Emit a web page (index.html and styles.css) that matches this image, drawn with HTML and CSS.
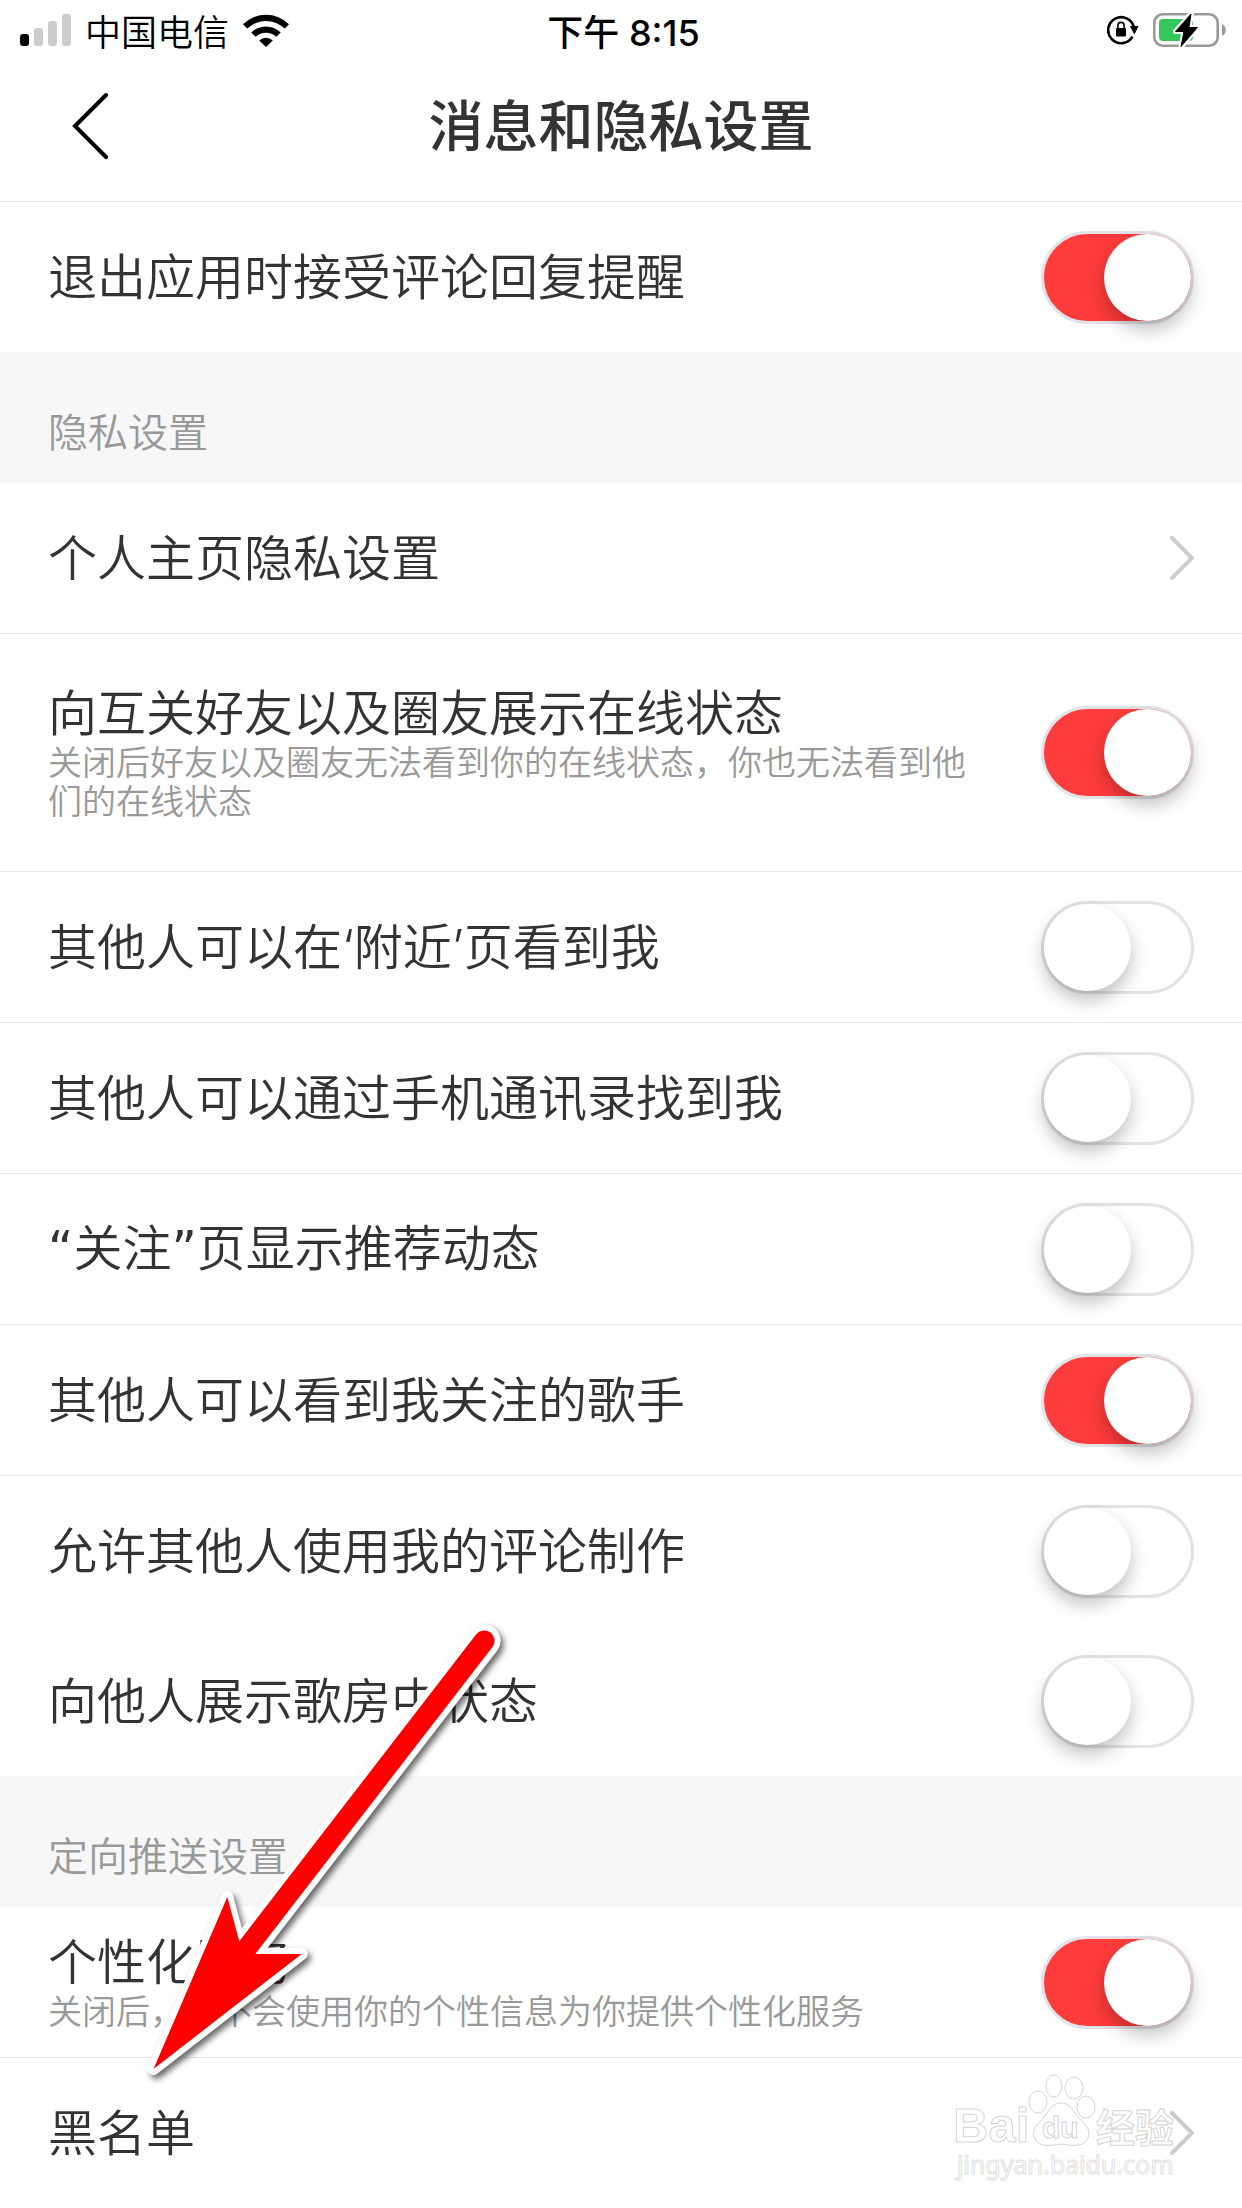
FILE: index.html
```html
<!DOCTYPE html>
<html lang="zh-CN">
<head>
  <meta charset="UTF-8">
  <meta name="viewport" content="width=device-width, initial-scale=1.0">
  <title>消息和隐私设置</title>
  <link rel="stylesheet" href="styles.css">
</head>
<body>

  <div class="status-bar">
    <div class="status-left">
      <svg class="signal" width="51" height="32" viewBox="0 0 51 32">
        <rect x="0" y="20" width="9" height="12" rx="3" fill="#000"/>
        <rect x="14" y="14" width="9" height="18" rx="3" fill="#ccc"/>
        <rect x="28" y="7" width="9" height="25" rx="3" fill="#ccc"/>
        <rect x="42" y="0" width="9" height="32" rx="3" fill="#ccc"/>
      </svg>
      <span>中国电信</span>
      <svg class="wifi" width="46" height="33" viewBox="0 0 46 33">
        <path d="M0 10.300a32.500 32.500 0 0 1 46 0l-4.300 4.300a26.500 26.500 0 0 0-37.400 0z"/>
        <path d="M8.300 18.400a21 21 0 0 1 29.400 0l-4.400 4.400a14.800 14.800 0 0 0-20.600 0z"/>
        <path d="M16.200 26.400a9.800 9.800 0 0 1 13.600 0L23 33z"/>
      </svg>
    </div>
    <div class="status-time">下午 8:15</div>
    <div class="status-right">
      <svg width="32" height="30" viewBox="0 0 32 30">
        <path d="M25.500 21.600A13 13 0 1 1 27 13" fill="none" stroke="#000" stroke-width="2.600"/>
        <path d="M23.500 11.500h7.500l-3.700 7z" stroke="#000" stroke-linejoin="round"/>
        <rect x="9" y="13" width="10" height="8.500" rx="1"/>
        <path d="M10.900 13v-2.500a3.100 3.100 0 0 1 6.200 0V13" fill="none" stroke="#000" stroke-width="1.600"/>
      </svg>
      <svg width="74" height="36" viewBox="0 0 74 36">
        <rect x="1.300" y="2.300" width="63.400" height="31.400" rx="8.500" fill="none" stroke="#999" stroke-width="2.600"/>
        <rect x="6" y="7" width="34" height="22" rx="4" fill="#34c759"/>
        <path d="M69 12c5 2 5 10 0 12z" fill="#999"/>
        <path d="M38.500 1 22.500 19.500H31L28 35 44.500 15.500H36z" fill="#000" stroke="#fff" stroke-width="5" stroke-linejoin="round"/>
        <path d="M38 2 22.500 19.500H31L28 34.500 44.500 15.500H36z" fill="#000" stroke="#000" stroke-linejoin="round"/>
      </svg>
    </div>
  </div>

  <header class="navbar">
    <button class="back" aria-label="返回">
      <svg width="36" height="68" viewBox="0 0 36 68"><path d="M34 3 3 34l31 31"/></svg>
    </button>
    <h1>消息和隐私设置</h1>
  </header>

  <main>
    <div class="row last">
      <label class="name" for="reply">退出应用时接受评论回复提醒</label>
      <input class="switch" type="checkbox" id="reply" checked>
    </div>

    <h2>隐私设置</h2>

    <a class="row" href="#privacy">
      <span class="name">个人主页隐私设置</span>
      <svg class="chevron" width="26" height="44" viewBox="0 0 26 44"><path d="M4 2l20 20L4 42"/></svg>
    </a>
    <div class="row tall">
      <label class="text" for="online">
        <span class="name">向互关好友以及圈友展示在线状态</span>
        <span class="desc">关闭后好友以及圈友无法看到你的在线状态，你也无法看到他们的在线状态</span>
      </label>
      <input class="switch" type="checkbox" id="online" checked>
    </div>
    <div class="row">
      <label class="name" for="nearby">其他人可以在‘附近’页看到我</label>
      <input class="switch" type="checkbox" id="nearby">
    </div>
    <div class="row">
      <label class="name" for="contacts">其他人可以通过手机通讯录找到我</label>
      <input class="switch" type="checkbox" id="contacts">
    </div>
    <div class="row">
      <label class="name" for="feed"><span class="quote">“</span>关注<span class="quote">”</span>页显示推荐动态</label>
      <input class="switch" type="checkbox" id="feed">
    </div>
    <div class="row">
      <label class="name" for="singers">其他人可以看到我关注的歌手</label>
      <input class="switch" type="checkbox" id="singers" checked>
    </div>
    <div class="row last">
      <label class="name" for="comments">允许其他人使用我的评论制作</label>
      <input class="switch" type="checkbox" id="comments">
    </div>
    <div class="row last">
      <label class="name" for="room">向他人展示歌房中状态</label>
      <input class="switch" type="checkbox" id="room">
    </div>

    <h2>定向推送设置</h2>

    <div class="row">
      <label class="text" for="personal">
        <span class="name">个性化服务</span>
        <span class="desc">关闭后，将不会使用你的个性信息为你提供个性化服务</span>
      </label>
      <input class="switch" type="checkbox" id="personal" checked>
    </div>
    <a class="row last" href="#blacklist">
      <span class="name">黑名单</span>
      <svg class="chevron" width="26" height="44" viewBox="0 0 26 44"><path d="M4 2l20 20L4 42"/></svg>
    </a>
  </main>

  <!-- arrow pointing at the blacklist row -->
  <svg class="arrow" width="380" height="460" viewBox="0 0 380 460">
    <g transform="translate(-140 -1620)">
      <path class="arrow-edge" d="M153.500 2069 227.300 1897l12 44.300L476 1634.500a10 10 0 0 1 16.500 12.500L255.300 1954h46.400z"/>
      <path class="arrow-fill" d="M153.500 2069 227.300 1897l12 44.300L476 1634.500a10 10 0 0 1 16.500 12.500L255.300 1954h46.400z"/>
    </g>
  </svg>

  <!-- watermark -->
  <svg class="watermark" width="240" height="120" viewBox="0 0 240 120">
    <text class="brand" x="9" y="62" font-size="49">Bai</text>
    <ellipse cx="94" cy="22" rx="9" ry="11"/>
    <ellipse cx="110" cy="6" rx="8" ry="11"/>
    <ellipse cx="130" cy="8" rx="9" ry="11"/>
    <ellipse cx="142" cy="27" rx="9" ry="11"/>
    <path d="M117 23c10 0 12 9 18 15 8 8 12 13 9 20-4 9-14 8-27 6-12 2-22 3-26-5-4-8 1-13 7-20 7-7 9-16 19-16z"/>
    <text class="brand" x="98" y="58" font-size="30">du</text>
    <text class="brand" x="152" y="62" font-size="39">经验</text>
    <text class="site" x="13" y="94" font-size="25">jingyan.baidu.com</text>
  </svg>

</body>
</html>
```
FILE: styles.css
```css
* {
  box-sizing: border-box;
}
body {
  position: relative;
  margin: 0;
  background-color: #fff;
  color: #333;
  font-family: Inter, 'Noto Sans CJK SC', sans-serif;
}
.status-bar {
  display: grid;
  grid-template-columns: 1fr auto 1fr;
  align-items: center;
  height: 60px;
  padding: 0 15px 0 20px;
  color: #000;
  font-size: 36px;
  font-weight: 350;
}
.status-left, .status-right {
  display: flex;
  align-items: center;
  gap: 14px;
}
.status-right {
  justify-content: flex-end;
}
.status-time {
  font-weight: 500;
}
.navbar {
  display: grid;
  grid-template-columns: 120px 1fr 120px;
  align-items: center;
  height: 142px;
  padding-bottom: 10px;
  border-bottom: 1px solid #e5e5e5;
}
.back {
  display: flex;
  width: 120px;
  padding: 0 0 0 72px;
  border: none;
  background: none;
  cursor: pointer;
}
.back path {
  fill: none;
  stroke: #000;
  stroke-width: 4;
  stroke-linecap: round;
}
h1 {
  margin: 0;
  font-size: 55px;
  font-weight: 500;
  line-height: 80px;
  text-align: center;
}
h2 {
  margin: 0;
  padding: 51px 48px 20px;
  background-color: #f7f7f7;
  color: #999;
  font-size: 40px;
  font-weight: 350;
  line-height: 60px;
}
.row {
  display: flex;
  align-items: center;
  justify-content: space-between;
  min-height: 151px;
  padding: 0 48px;
  border-bottom: 1px solid #e5e5e5;
  color: #333;
  font-weight: 350;
  text-decoration: none;
}
.row.last {
  min-height: 150px;
  border-bottom: none;
}
.row.tall {
  padding-top: 50px;
  padding-bottom: 50px;
}
.text {
  max-width: 920px;
}
.name {
  display: block;
  font-size: 49px;
  line-height: 59px;
}
.quote {
  font-family: 'DejaVu Sans', sans-serif;
  font-weight: 400;
}
.desc {
  display: block;
  color: #999;
  font-size: 34px;
  line-height: 39px;
}
.chevron path {
  fill: none;
  stroke: #ccc;
  stroke-width: 4;
  stroke-linecap: round;
}
.switch {
  appearance: none;
  flex-shrink: 0;
  width: 153px;
  height: 93px;
  margin: 0;
  border: 3px solid #e3e2e7;
  border-radius: 47px;
  background-color: #fff;
  cursor: pointer;
}
.switch::before {
  content: "";
  display: block;
  width: 87px;
  height: 87px;
  border-radius: 50%;
  background-color: #fff;
  box-shadow: 0 9px 18px rgba(0, 0, 0, 0.25);
}
.switch:checked {
  background-color: #ff3b3b;
}
.switch:checked::before {
  margin-left: 60px;
}
.arrow {
  position: absolute;
  left: 140px;
  top: 1620px;
  pointer-events: none;
  filter: drop-shadow(3px 4px 3px rgba(0, 0, 0, 0.6));
}
.arrow-edge {
  fill: #fff;
  stroke: #fff;
  stroke-width: 12;
  stroke-linejoin: round;
}
.arrow-fill {
  fill: #f00;
}
.watermark {
  position: absolute;
  right: 58px;
  top: 2080px;
  overflow: visible;
  pointer-events: none;
  fill: #fff;
  stroke: #d4d4d4;
  stroke-width: 1;
}
.brand {
  font-family: 'Liberation Sans', 'Noto Sans CJK SC', sans-serif;
  font-weight: 700;
}
.site {
  font-family: 'Noto Sans', sans-serif;
  stroke: #e0e0e0;
}
```
